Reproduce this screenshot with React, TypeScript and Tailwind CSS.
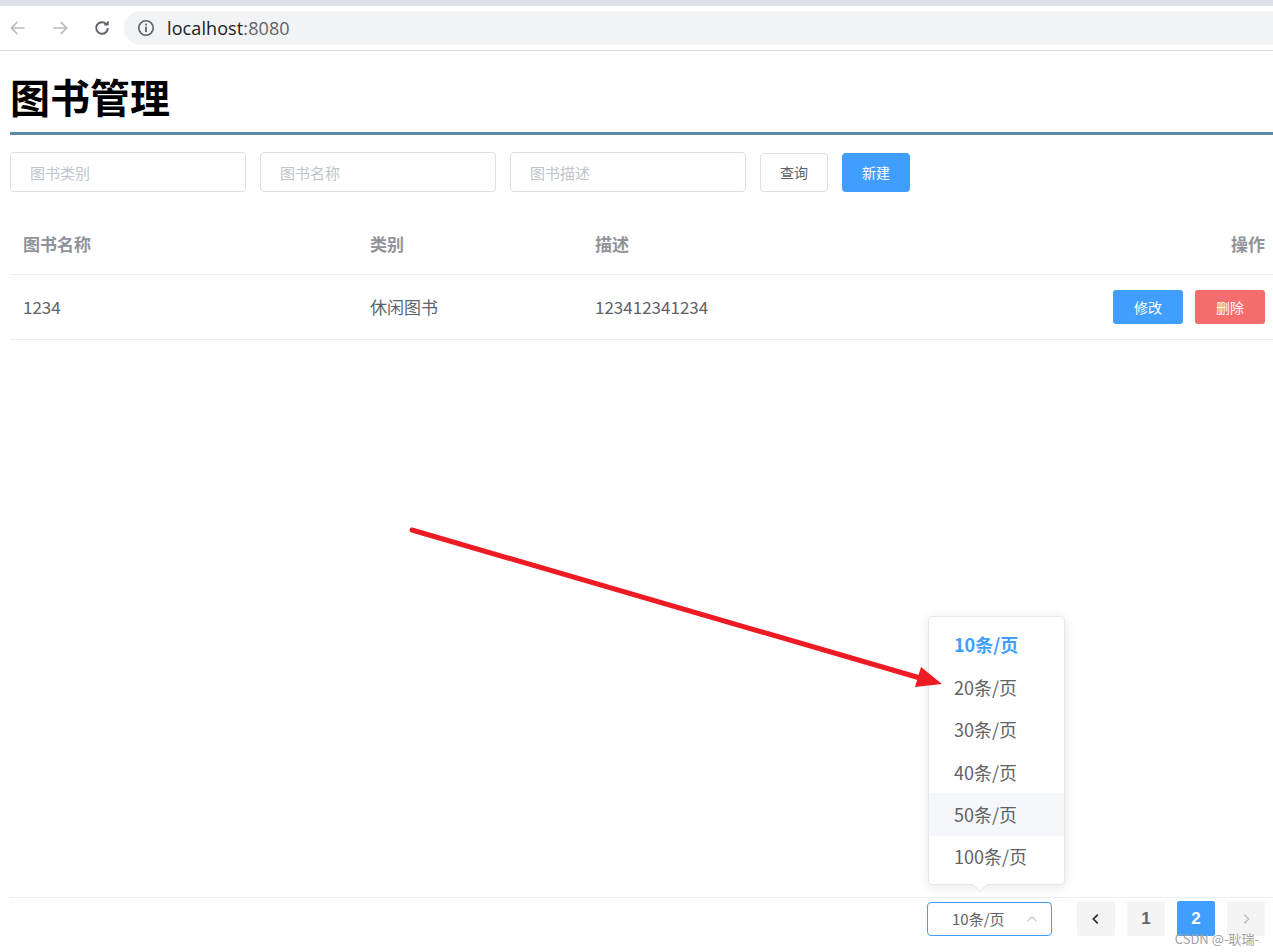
import React from 'react';

const cjk = { fontFamily: '"Noto Sans CJK SC", "Noto Sans", sans-serif' };

const rows = [{ name: '1234', type: '休闲图书', desc: '123412341234' }];
const sizes = ['10条/页', '20条/页', '30条/页', '40条/页', '50条/页', '100条/页'];

function BrowserBar() {
  return (
    <div className="bg-[#dee1e6] pt-[6px]">
      <div className="flex h-[45px] items-center bg-white border-b border-[#dadce0]">
        <div className="flex items-center gap-[22px] pl-[8px] pr-[12px]">
          <svg width="20" height="20" viewBox="0 0 24 24" fill="none" stroke="#b8babd" strokeWidth="2">
            <path d="M20 12H5M11 5l-7 7 7 7" />
          </svg>
          <svg width="20" height="20" viewBox="0 0 24 24" fill="none" stroke="#b8babd" strokeWidth="2">
            <path d="M4 12h15M13 5l7 7-7 7" />
          </svg>
          <svg width="20" height="20" viewBox="0 0 24 24" fill="none" stroke="#5f6368" strokeWidth="2.4">
            <path d="M19 12a7 7 0 1 1-2.05-4.95" />
            <path d="M19.5 3.5v5h-5" fill="#5f6368" strokeWidth="1" />
          </svg>
        </div>
        <div className="flex h-[34px] flex-1 items-center rounded-l-full bg-[#f1f3f4] pl-[13px]">
          <svg width="18" height="18" viewBox="0 0 20 20">
            <circle cx="10" cy="10" r="8" fill="none" stroke="#5f6368" strokeWidth="1.8" />
            <rect x="9" y="8.5" width="2" height="6" fill="#5f6368" />
            <rect x="9" y="5.2" width="2" height="2" fill="#5f6368" />
          </svg>
          <span className="ml-[12px] text-[18px] tracking-[0.1px]" style={{ fontFamily: '"Open Sans", "Noto Sans", sans-serif' }}>
            <span className="text-[#202124]">localhost</span>
            <span className="text-[#5f6368]">:8080</span>
          </span>
        </div>
      </div>
    </div>
  );
}

function Pagination() {
  return (
    <div className="relative flex h-[55px] items-start justify-end border-t border-[#ebeef5] pt-[3px] pr-[8px]">
      {/* page size dropdown */}
      <div className="absolute bottom-[67px] left-[918px] w-[137px] rounded-[4px] border border-[#e4e7ed] bg-white pt-[7px] pb-[6px] shadow-[0_2px_12px_rgba(0,0,0,0.1)]">
        {sizes.map((s, i) => (
          <div
            key={s}
            className={`flex h-[42.4px] items-center px-[25px] text-[18px] ${
              i === 0 ? 'font-bold text-[#409eff]' : 'text-[#606266]'
            } ${i === 4 ? 'bg-[#f5f7fa]' : ''}`}
          >
            {s}
          </div>
        ))}
        <div className="absolute -bottom-[6px] left-[46px] h-[10px] w-[10px] rotate-45 border-r border-b border-[#e4e7ed] bg-white" />
      </div>

      <div className="mt-[1px] mr-[25px] flex h-[34px] w-[125px] items-center justify-between rounded-[4px] border border-[#409eff] pl-[24px] pr-[12px] text-[15px] text-[#606266]">
        <span>10条/页</span>
        <svg width="14" height="14" viewBox="0 0 16 16" fill="none" stroke="#c0c4cc" strokeWidth="1.3">
          <path d="M3 10.5L8 5.5l5 5" />
        </svg>
      </div>
      <div className="flex gap-[12px]">
        <div className="flex h-[35px] w-[38px] items-center justify-center rounded-[2px] bg-[#f4f4f5]">
          <svg width="14" height="14" viewBox="0 0 16 16" fill="none" stroke="#303133" strokeWidth="2">
            <path d="M10 3L5 8l5 5" />
          </svg>
        </div>
        <div className="flex h-[35px] w-[38px] items-center justify-center rounded-[2px] bg-[#f4f4f5] text-[17px] font-bold text-[#606266]" style={{ fontFamily: 'Arial, "Liberation Sans", sans-serif' }}>
          1
        </div>
        <div className="flex h-[35px] w-[38px] items-center justify-center rounded-[2px] bg-[#409eff] text-[17px] font-bold text-white" style={{ fontFamily: 'Arial, "Liberation Sans", sans-serif' }}>
          2
        </div>
        <div className="flex h-[35px] w-[38px] items-center justify-center rounded-[2px] bg-[#f4f4f5]">
          <svg width="14" height="14" viewBox="0 0 16 16" fill="none" stroke="#c0c4cc" strokeWidth="2">
            <path d="M6 3l5 5-5 5" />
          </svg>
        </div>
      </div>
      {/* watermark */}
      <span className="absolute right-[14px] bottom-[6px] text-[13px] leading-[14px] text-[#a0a0a0]">CSDN @-耿瑞-</span>
    </div>
  );
}

export default function App() {
  return (
    <div className="relative flex h-[952px] w-[1273px] flex-col overflow-hidden bg-white" style={cjk}>
      <BrowserBar />
      <div className="flex flex-1 flex-col pl-[10px]">
        <h1 className="mt-[22px] border-b-[3px] border-[#5b8aa6] pb-[13px] text-[40px] leading-[46px] font-bold text-black">
          图书管理
        </h1>

        <div className="mt-[17px] flex items-center gap-[14px]">
          {['图书类别', '图书名称', '图书描述'].map((p) => (
            <input
              key={p}
              placeholder={p}
              className="h-[40px] w-[236px] rounded-[4px] border border-[#dcdfe6] px-[19px] text-[15px] outline-none placeholder:text-[#c0c4cc]"
              style={cjk}
            />
          ))}
          <button className="h-[39px] w-[68px] rounded-[4px] border border-[#dcdfe6] bg-white text-[14px] text-[#606266]">
            查询
          </button>
          <button className="h-[39px] w-[68px] rounded-[4px] bg-[#409eff] text-[14px] text-white">新建</button>
        </div>

        <div className="mt-[22px] flex-1">
          <div className="grid h-[61px] grid-cols-[347px_225px_1fr_auto] items-center border-b border-[#ebeef5] text-[17px] font-bold text-[#909399]">
            <div className="pl-[13px]">图书名称</div>
            <div className="pl-[13px]">类别</div>
            <div className="pl-[13px]">描述</div>
            <div className="pr-[8px] text-right">操作</div>
          </div>
          {rows.map((r) => (
            <div
              key={r.name}
              className="grid h-[65px] grid-cols-[347px_225px_1fr_auto] items-center border-b border-[#ebeef5] text-[17px] text-[#606266]"
            >
              <div className="pl-[13px]">{r.name}</div>
              <div className="pl-[13px]">{r.type}</div>
              <div className="pl-[13px]">{r.desc}</div>
              <div className="flex gap-[12px] pr-[8px]">
                <button className="h-[34px] w-[70px] rounded-[3px] bg-[#409eff] text-[14px] text-white">修改</button>
                <button className="h-[34px] w-[70px] rounded-[3px] bg-[#f56c6c] text-[14px] text-white">删除</button>
              </div>
            </div>
          ))}
        </div>

        <Pagination />
      </div>

      {/* annotation arrow */}
      <svg className="pointer-events-none absolute left-0 top-0" width="1273" height="952">
        <line x1="412" y1="530" x2="920" y2="678" stroke="#ed1c24" strokeWidth="5" strokeLinecap="round" />
        <polygon points="942,684 915,687 921,667" fill="#ed1c24" />
      </svg>
    </div>
  );
}
